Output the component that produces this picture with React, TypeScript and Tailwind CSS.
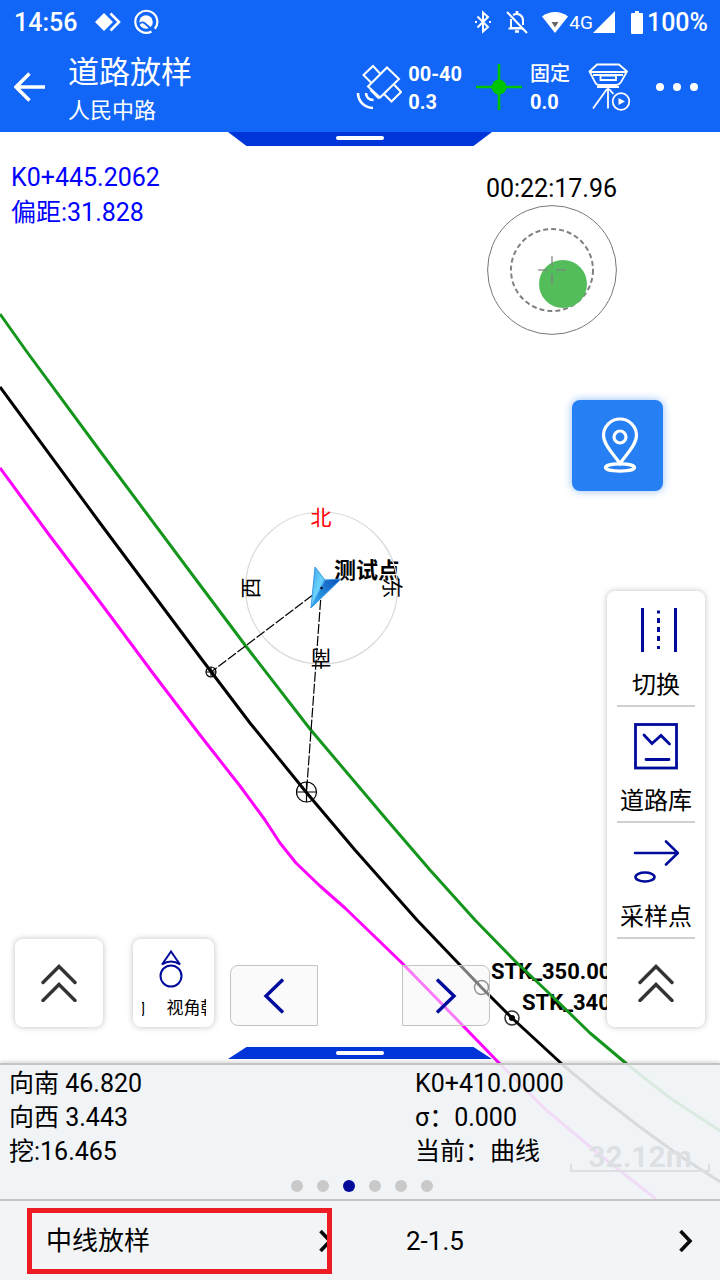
import { useState, type ReactNode } from "react";

interface ToolItem {
  label: string;
  icon: ReactNode;
}

const BLACK_LINE = "0,387 100,523 200,657 250,723 306,792 355,850 417,920 481,987 512,1018 563,1065 600,1096 640,1127 680,1156 722,1183";
const GREEN_LINE = "0,314 27,352 100,451 200,585 245,645 310,729 387,820 430,870 475,920 515,961 552,996 590,1033 628,1065 670,1098 722,1132";
const MAGENTA_LINE = "0,468 50,536 100,602 155,676 200,735 240,786 265,820 280,843 296,863 320,886 345,908 402,963 440,1002 500,1064 545,1109 600,1155 656,1199";

const DoubleChevron = () => (
  <svg width="36" height="38" viewBox="0 0 36 38" fill="none" stroke="#333" strokeWidth="3.400" strokeLinecap="round" strokeLinejoin="miter">
    <path d="M2 18.500L18 2.500L34 18.500M2 36.500L18 20.500L34 36.500" />
  </svg>
);

const RowChevron = () => (
  <svg className="shrink-0" width="14" height="22" viewBox="0 0 14 22" fill="none" stroke="#0a0a0a" strokeWidth="3.600">
    <path d="M1.500 1L11 11L1.500 21" />
  </svg>
);

const tools: ToolItem[] = [
  {
    label: "切换",
    icon: (
      <svg width="46" height="48" viewBox="0 0 46 48" stroke="#000a9b" strokeWidth="3">
        <path d="M9.500 2V46M42.500 2V46" />
        <path d="M25.500 4.500V7.500M25.500 12V17M25.500 21V26M25.500 30V35M25.500 40V43" />
      </svg>
    ),
  },
  {
    label: "道路库",
    icon: (
      <svg width="46" height="48" viewBox="0 0 46 48" fill="none" stroke="#000a9b" strokeWidth="2.800">
        <rect x="2.500" y="2.500" width="41" height="43.500" />
        <path d="M11 13L19 21.500L28 13.500L36.500 22M13 37.500H36" strokeLinecap="round" />
      </svg>
    ),
  },
  {
    label: "采样点",
    icon: (
      <svg width="46" height="48" viewBox="0 0 46 48" fill="none" stroke="#000a9b" strokeWidth="2.600" strokeLinecap="round">
        <path d="M2 15H44.500M33 3.500L45 15L33 26.500" />
        <ellipse cx="12" cy="39" rx="9.500" ry="4.500" />
      </svg>
    ),
  },
];

function StatusBar() {
  return (
    <div className="flex h-11 items-center justify-between pr-3 pl-3.5 text-[25px] leading-none font-medium">
      <div className="flex items-center">
        <span>14:56</span>
        <svg className="ml-4" width="28" height="22" viewBox="0 0 28 22">
          <path d="M11 2L20 11L11 20L2 11Z" fill="#fff" />
          <path d="M17.500 2.500L26 11L17.500 19.500" fill="none" stroke="#fff" strokeWidth="2.600" />
        </svg>
        <svg className="ml-3" width="26" height="26" viewBox="0 0 26 26" fill="none" stroke="#fff" strokeWidth="2.200">
          <circle cx="13" cy="13" r="6.800" fill="#fff" stroke="none" />
          <path d="M5.500 15.500C8 13 9.500 12.500 12 14.500L21.500 23" stroke="#1166f8" strokeWidth="2" />
          <path d="M21.800 19.800A11 11 0 1 0 18.500 22.500" />
        </svg>
      </div>
      <div className="flex items-center">
        <svg width="16" height="24" viewBox="0 0 16 24" fill="none" stroke="#fff" strokeWidth="2">
          <path d="M2.500 6.500L13 17L8 21.500V2.500L13 7L2.500 17.500" />
          <path d="M1 11V13M15 11V13" />
        </svg>
        <svg className="ml-3.5" width="24" height="24" viewBox="0 0 24 24" fill="none" stroke="#fff" strokeWidth="2">
          <path d="M2 2L22 23" />
          <path d="M8 5C13 2.500 18 5 18 10.500V15M6 9V18H17M3.500 18.500H18" />
          <path d="M12 1V4M10 21.500H14" strokeWidth="2.600" />
        </svg>
        <svg className="ml-3" width="28" height="24" viewBox="0 0 28 24">
          <path d="M1 6.500C8 .5 20 .5 27 6.500L14 23Z" fill="#fff" />
          <path d="M10.500 12H17.500L14 17.500Z" fill="#666" />
        </svg>
        <span className="text-[19px] font-normal">4G</span>
        <svg width="22" height="22" viewBox="0 0 22 22" fill="#fff">
          <path d="M22 0V22H0Z" />
        </svg>
        <svg className="ml-4" width="12" height="23" viewBox="0 0 12 23" fill="#fff">
          <path d="M4 0H8V2H11Q12 2 12 3V22Q12 23 11 23H1Q0 23 0 22V3Q0 2 1 2H4Z" />
        </svg>
        <span className="ml-1">100%</span>
      </div>
    </div>
  );
}

function AppBar() {
  return (
    <div className="flex h-[88px] items-center pr-[22px] pb-0.5 pl-3.5">
      <button aria-label="返回" className="shrink-0">
        <svg width="32" height="30" viewBox="0 0 32 30" fill="none" stroke="#fff" strokeWidth="3.600">
          <path d="M31 15H2M15.500 1.500L2 15L15.500 28.500" />
        </svg>
      </button>
      <div className="ml-[22px] flex-1 pt-2.5">
        <h1 className="text-[31px] leading-[38px]">道路放样</h1>
        <p className="text-[22px] leading-[38px]">人民中路</p>
      </div>
      <svg className="shrink-0" width="46" height="48" viewBox="0 0 46 48" fill="none" stroke="#fff" strokeWidth="2">
        <path d="M31 4.500L43 16L24 34.500L12 23.500Z" />
        <path d="M24 10.500L17 3L7.500 12L15 19.500M38 21.500L45 29L35.500 38.500L28 31" />
        <path d="M14.500 27L23 35.500" />
        <path d="M2 30C2 38 8 44.500 17 45M10 30C10 34 13 37 17.500 37" strokeWidth="2.600" />
      </svg>
      <div className="ml-1.5 pt-0.5 text-xl leading-7 font-bold">
        <div>00-40</div>
        <div>0.3</div>
      </div>
      <svg className="ml-3.5 shrink-0" width="46" height="46" viewBox="0 0 46 46">
        <path d="M23 0V46M0 23H46" stroke="#00c400" strokeWidth="2.600" />
        <circle cx="23" cy="23" r="7.500" fill="#00c400" />
      </svg>
      <div className="ml-2 pt-0.5 text-xl leading-7 font-bold">
        <div className="font-medium">固定</div>
        <div>0.0</div>
      </div>
      <button aria-label="接收机" className="ml-[18px] shrink-0">
        <svg width="44" height="48" viewBox="0 0 44 48" fill="none" stroke="#fff" strokeWidth="1.800">
          <path d="M9 1.500H31L39 8.500L33 19Q31 22 28 22H11Q8 22 7 19L1.500 8.500Z" />
          <path d="M2 9H39M5 12H35M12.500 12.500H28V17H12.500ZM9 24H31" />
          <path d="M20 24V45.500M19 26L5 45.500M21 26L25.500 31" />
          <circle cx="33" cy="38.500" r="8.300" />
          <path d="M30.500 35L37 38.500L30.500 42Z" fill="#fff" stroke="none" />
        </svg>
      </button>
      <button aria-label="更多" className="ml-6 flex gap-[9px]">
        <span className="size-2 rounded-full bg-white" />
        <span className="size-2 rounded-full bg-white" />
        <span className="size-2 rounded-full bg-white" />
      </button>
    </div>
  );
}

function RoadMap() {
  return (
    <svg className="absolute inset-0 h-full w-full" viewBox="0 132 720 1067" preserveAspectRatio="xMidYMid slice" fill="none">
      <g fill="#000" fontSize="22" fontWeight="700">
        <text x="491" y="979">STK_350.0000</text>
        <text x="522" y="1010">STK_340.0000</text>
        <text x="334" y="578">测试点</text>
      </g>
      <g stroke="#333" strokeWidth="1.500">
        <circle cx="481.500" cy="987.500" r="7" />
        <circle cx="512" cy="1018" r="7" />
      </g>
      <circle cx="512" cy="1018" r="3" fill="#000" />
      <g strokeWidth="3" strokeLinejoin="round">
        <polyline points={BLACK_LINE} stroke="#000" />
        <polyline points={GREEN_LINE} stroke="#14961c" />
        <polyline points={MAGENTA_LINE} stroke="#f0f" />
      </g>

      {/* compass */}
      <circle cx="321.500" cy="588" r="76" stroke="#d9d9d9" strokeWidth="1.200" />
      <g fontSize="21" fill="#000" textAnchor="middle">
        <text x="321" y="525" fill="#f00">北</text>
        <text transform="translate(251 588) rotate(-90)" y="7">西</text>
        <text transform="translate(392 588) rotate(90)" y="7">东</text>
        <text transform="translate(321 658) rotate(180)" y="7">南</text>
      </g>

      <g stroke="#000" strokeWidth="1.200">
        <path d="M322 588L211 672M321.500 588L306.500 792" strokeDasharray="10 2" />
        <circle cx="211" cy="672" r="5" />
        <path d="M206 672H216M211 667V677" />
        <circle cx="306.500" cy="792" r="10" />
        <path d="M296.500 792H316.500M306.500 782V802" />
      </g>

      {/* current position */}
      <defs>
        <linearGradient id="wingLeft" x1="0" y1="0" x2="1" y2="1">
          <stop offset="0" stopColor="#2f9be6" />
          <stop offset="0.5" stopColor="#6bd3fb" />
          <stop offset="1" stopColor="#1c93e8" />
        </linearGradient>
        <linearGradient id="wingRight" x1="0" y1="1" x2="1" y2="0">
          <stop offset="0" stopColor="#35b4f5" />
          <stop offset="1" stopColor="#0a4fb8" />
        </linearGradient>
      </defs>
      <g stroke="#3f9ae6" strokeWidth="1" strokeLinejoin="round">
        <path d="M315 567L325 580L311 608Z" fill="url(#wingLeft)" />
        <path d="M325 580L341 579L311 608Z" fill="url(#wingRight)" />
      </g>
      <circle cx="321.500" cy="588" r="1.200" fill="#000" />

      {/* map scale */}
      <path d="M571 1164V1171H709V1164" stroke="#333" strokeWidth="2" />
      <text x="640" y="1167" fill="#333" fontSize="30" fontWeight="700" textAnchor="middle">32.12m</text>
    </svg>
  );
}

function BubbleLevel() {
  return (
    <svg width="130" height="130" viewBox="0 0 130 130" fill="none">
      <circle cx="65" cy="65" r="64.400" stroke="#777" />
      <circle cx="65" cy="65" r="41" stroke="#808080" strokeWidth="2" strokeDasharray="5 3" />
      <circle cx="76" cy="79" r="24" fill="#53bd5b" />
      <path d="M65 51V61M65 69V79M51 65H61M69 65H79" stroke="#808080" strokeOpacity="0.8" strokeWidth="1.500" />
    </svg>
  );
}

export default function App() {
  const [page, setPage] = useState(2);

  return (
    <div className="flex min-h-screen flex-col bg-white font-['Roboto','Noto_Sans_CJK_SC',sans-serif] text-black">
      <header className="bg-[#1166f8] text-white">
        <StatusBar />
        <AppBar />
      </header>

      <main className="relative flex flex-1 flex-col overflow-hidden">
        <RoadMap />

        <button
          aria-label="展开顶部"
          className="relative flex h-3.5 w-[264px] justify-center self-center bg-[#0035d9] pt-1 [clip-path:polygon(0_0,100%_0,93%_100%,7%_100%)]"
        >
          <span className="h-1 w-12 rounded-full bg-white" />
        </button>

        <div className="relative flex justify-between pt-3.5 pr-[103px] pl-[11px]">
          <div className="text-[25px] leading-[35px] text-[#0000ff]">
            <p>K0+445.2062</p>
            <p>偏距:31.828</p>
          </div>
          <div className="flex flex-col items-end gap-0.5 pt-3.5 text-[25px] leading-[29px]">
            <p>00:22:17.96</p>
            <BubbleLevel />
          </div>
        </div>

        <div className="relative mt-[65px] flex justify-end pr-[57px]">
          <button aria-label="定位" className="flex size-[91px] items-center justify-center rounded-lg bg-[#2680f3] pb-0.5 pl-1 shadow-[0_0_8px_#2680f380]">
            <svg width="38" height="56" viewBox="0 0 38 56" fill="none" stroke="#fff" strokeWidth="3.200">
              <path d="M19 46.500C15 40 2.500 28.500 2.500 18.500A16.500 16.500 0 0 1 35.500 18.500C35.500 28.500 23 40 19 46.500Z" />
              <circle cx="19" cy="20" r="6" />
              <ellipse cx="19" cy="50.500" rx="14.500" ry="3.600" />
            </svg>
          </button>
        </div>

        <div className="relative flex flex-1 items-end justify-between pr-[15px] pb-5 pl-[15px]">
          <div className="flex items-end">
            <button aria-label="展开" className="flex size-[88px] items-center justify-center rounded-lg bg-white shadow-[0_0_6px_#00000040]">
              <DoubleChevron />
            </button>
            <button className="ml-[30px] flex h-[88px] w-[81px] flex-col items-center rounded-lg bg-white pt-[11px] shadow-[0_0_6px_#00000040]">
              <svg className="-ml-1.5" width="24" height="38" viewBox="0 0 24 38" fill="none" stroke="#000a9b" strokeWidth="2">
                <path d="M12 1.500L3 14.500Q12 8.500 21 14.500Z" />
                <circle cx="12" cy="26" r="10.500" />
              </svg>
              <span className="mt-2 flex w-16 gap-[21px] overflow-hidden text-[17px] leading-6 whitespace-nowrap">
                <span className="-ml-16">视角朝向</span>
                <span>视角朝向</span>
              </span>
            </button>
            <div className="mb-px ml-4 flex gap-[84px]">
              <button aria-label="上一个" className="flex h-[61px] w-[88px] items-center justify-center rounded-l-lg border border-[#c4c4c4] bg-[#f5f5f5]/50">
                <svg width="22" height="36" viewBox="0 0 22 36" fill="none" stroke="#000a9b" strokeWidth="3.400">
                  <path d="M20 1.500L3 18L20 34.500" />
                </svg>
              </button>
              <button aria-label="下一个" className="flex h-[61px] w-[88px] items-center justify-center rounded-r-lg border border-[#c4c4c4] bg-[#f5f5f5]/50">
                <svg width="22" height="36" viewBox="0 0 22 36" fill="none" stroke="#000a9b" strokeWidth="3.400">
                  <path d="M2 1.500L19 18L2 34.500" />
                </svg>
              </button>
            </div>
          </div>

          <div className="flex w-[98px] flex-col items-center rounded-lg bg-white shadow-[0_0_6px_#00000040]">
            {tools.map((tool) => (
              <button key={tool.label} className="flex h-[116px] w-[78px] flex-col items-center justify-end border-b-2 border-[#cfcfcf] pb-0.5">
                {tool.icon}
                <span className="mt-[13px] text-2xl leading-9">{tool.label}</span>
              </button>
            ))}
            <button aria-label="收起" className="flex h-[88px] w-full items-center justify-center">
              <DoubleChevron />
            </button>
          </div>
        </div>

        <button
          aria-label="收起底部"
          className="relative flex h-3 w-[264px] justify-center self-center bg-[#0035d9] pt-1 [clip-path:polygon(7%_0,93%_0,100%_100%,0_100%)]"
        >
          <span className="h-1 w-12 rounded-full bg-white" />
        </button>

        <section className="relative mt-1 border-t-2 border-[#c4c4c4] bg-[#eff3f6]/90 pb-[7px] shadow-[0_-2px_3px_#00000020]">
          <div className="grid grid-cols-[415fr_305fr] pt-0.5 text-[25px] leading-[34px]">
            <div className="pl-[9px]">
              <p>向南 46.820</p>
              <p>向西 3.443</p>
              <p>挖:16.465</p>
            </div>
            <div>
              <p>K0+410.0000</p>
              <p>σ：0.000</p>
              <p>当前：曲线</p>
            </div>
          </div>
          <div className="mt-[11px] flex justify-center gap-3.5 pl-1">
            {[0, 1, 2, 3, 4, 5].map((i) => (
              <button
                key={i}
                aria-label={`第${i + 1}页`}
                onClick={() => setPage(i)}
                className={i === page ? "size-3 rounded-full bg-[#000a9b]" : "size-3 rounded-full bg-[#c9c9c9]"}
              />
            ))}
          </div>
        </section>
      </main>

      <footer className="grid grid-cols-2 border-t-2 border-[#c4c4c4] bg-[#f3f4f6] text-[26px] leading-9">
        <div className="pt-[7px] pr-7 pb-1.5 pl-[27px]">
          <button className="flex h-[66px] w-full items-center justify-between overflow-hidden border-5 border-[#ed1c24] pl-3.5">
            <span>中线放样</span>
            <span className="-mr-1.5">
              <RowChevron />
            </span>
          </button>
        </div>
        <button className="flex items-center justify-between pr-[27px] pl-[46px]">
          <span>2-1.5</span>
          <RowChevron />
        </button>
      </footer>
    </div>
  );
}
